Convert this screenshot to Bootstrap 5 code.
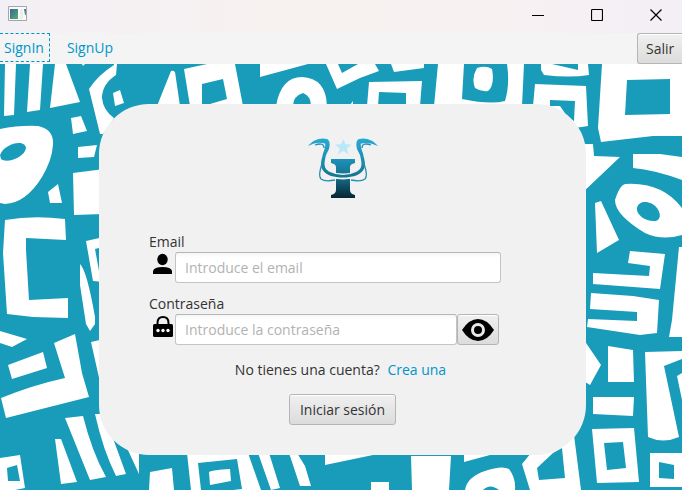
<!DOCTYPE html>
<html lang="es">
<head>
<meta charset="utf-8">
<meta name="viewport" content="width=device-width, initial-scale=1">
<title>Iniciar sesión</title>
<link href="https://cdn.jsdelivr.net/npm/bootstrap@5.3.0/dist/css/bootstrap.min.css" rel="stylesheet">
<style>
  body { font-family: "Open Sans", "Noto Sans", sans-serif; font-size: 14px; line-height: 20px; color: #333; background: #189cb9; }
  a { color: #0096c9; text-decoration: none; }
  .title-bar { height: 33px; background: linear-gradient(90deg, #f3f0f5, #f7f1f0 40%, #f7f1f1 70%, #f4eff6); }
  .win-btn { width: 59px; height: 27px; padding: 0 0 0 6px; border: 0; background: none; color: #000; }
  .menu-row { height: 31px; background: #f4f4f4; }
  .menu-link { height: 29px; line-height: 27px; padding: 0 5px 0 4px; border: 1px solid transparent; }
  .menu-link.focused { border: 1px dashed #0096c9; border-left: 0; }
  .fx-btn { height: 31px; padding: 0 10px; border: 1px solid #b5b5b5; border-radius: 3px; background: linear-gradient(#f0f0f0, #dcdcdc); box-shadow: inset 0 1px #fff; color: #333; font-size: 14px; line-height: 20px; }
  .exit-btn { width: 45px; padding: 0 8px; border-right: 0; border-radius: 3px 0 0 3px; }
  .pattern { z-index: 0; }
  .login-card { z-index: 1; max-width: 487px; margin: 40px 0 35px 3px; padding: 34px 85px 30px 50px; border-radius: 50px; background: #f1f1f1; }
  .brand-logo, .form-foot { margin-right: -35px; }
  .login-form { margin-top: 32px; }
  .field-gap { margin-top: 11px; }
  .field-icon { width: 26px; flex: none; }
  .fx-input { height: 31px; min-width: 0; padding: 0 9px; border: 1px solid #c4c4c4; border-top-color: #b5b5b5; border-radius: 3px; font-size: 14px; background: linear-gradient(#f6f6f6, #fff 5px); }
  .fx-input::placeholder { color: #b2b2b2; opacity: 1; }
  .password-row { margin-right: 2px; }
  .eye-btn { width: 42px; flex: none; padding: 0; }
  .signup-hint { margin: 15px 0 14px; }
</style>
<script src="https://cdn.jsdelivr.net/npm/bootstrap@5.3.0/dist/js/bootstrap.bundle.min.js"></script>
</head>
<body class="min-vh-100 d-flex flex-column overflow-hidden">

<header>
  <div class="title-bar d-flex justify-content-between align-items-start">
    <svg class="ms-2 mt-1" width="20" height="18" viewBox="0 0 20 18" aria-hidden="true">
      <defs><linearGradient id="app" x1="0" y1="0" x2="1" y2="1"><stop stop-color="#36679c"/><stop offset="1" stop-color="#56b068"/></linearGradient></defs>
      <path d="M.5 2.5h18v14H.5z" fill="#fafafa" stroke="#a3a6ad"/>
      <path d="M2 5h8v10H2z" fill="url(#app)"/><path d="M12 5h3v10h-3z" fill="#eceeee"/>
      <path d="M16 5h2v6h-1z" fill="url(#app)"/>
    </svg>
    <div class="d-flex">
      <button class="win-btn" type="button" aria-label="Minimizar"><svg width="12" height="12"><path d="M0 6.500h12" stroke="#000"/></svg></button>
      <button class="win-btn" type="button" aria-label="Maximizar"><svg width="12" height="12"><rect x=".5" y=".5" width="11" height="11" rx="1" fill="none" stroke="#000" stroke-width="1.200"/></svg></button>
      <button class="win-btn" type="button" aria-label="Cerrar"><svg width="12" height="12"><path d="M.5.5l11 11M11.500.5l-11 11" stroke="#000" stroke-width="1.200"/></svg></button>
    </div>
  </div>
  <nav class="menu-row d-flex align-items-start" aria-label="Principal">
    <a class="menu-link focused" href="#signin">SignIn</a>
    <a class="menu-link ms-2 ps-2" href="#signup">SignUp</a>
    <button class="fx-btn exit-btn ms-auto" type="button">Salir</button>
  </nav>
</header>

<main class="flex-grow-1 d-flex justify-content-center align-items-start position-relative">
  <svg class="pattern position-absolute top-0 start-0 w-100 h-100" viewBox="0 64 682 426" preserveAspectRatio="xMidYMid slice" aria-hidden="true">
    <path fill="#189cb9" d="M0 64h682v426H0z"/>
    <path fill="#fff" fill-rule="evenodd" d="
      M5 64H16L14 115 4 116Z M30 64H43L40 110 27 112Z M55 64H66L80 102 50 108Z M82 64H85L83 66Z
      M114 64H117L116 75Q102 84 102 98 103 110 114 118L103 134H100L89 89Q98 75 114 65Z
      M113 93L120 90 124 103 115 106Z M71 118L81 116 87 131 73 134Z M78 147L97 145 94 157 78 158Z
      M171 71Q173 70 175 72L180 106H157Z
      M184 69L207 64H235L243 106H190Z M202 84L223 79 227 99 210 104 202 106Z
      M0 129Q20 125 38 126 54 129 53 145 52 160 42 177 26 203 5 204L0 203Z
      M0 155C5 143 25 139 26 148 25 157 7 164 1 159Z
      M48 192L58 184 62 203H50Z M73 173L104 169V214L74 215Z
      M5 220Q33 215 65 219L66 240 26 238V250L29 300 68 298V318L33 317 7 314 3 253Z
      M86 241L104 237V282L93 281Z M95 249L99 248V271Z
      M80 264Q87 271 95 317V324L90 331 86 324 80 285Z
      M0 331L27 339 12 347 0 343Z M8 365L43 352 47 368 12 379Z
      M54 343L75 334 82 373 89 397 6 418 1 398Q33 385 65 378Z M91 342L104 339V400Z
      M65 418L83 416Q92 452 106 477L90 480Z M95 414H104L114 441 126 474 116 476Q103 450 95 414Z
      M55 439H61L77 482 61 484Z M127 448L139 450V474Z
      M0 458L20 455 25 488 15 490H0Z M7 468L17 465 20 481 8 481Z
      M150 472L172 468 174 490H149Z
      M187 453H248L261 490H191Z M198 463L237 459 242 489 233 490H201Z M209 472Q212 470 230 469L231 481 210 485Z
      M258 453H269L280 488 271 490Z M289 453H297L305 466 311 486H300Z M325 453H380L373 455 325 465Z
      M371 482H389V490H371Z M411 456H451L449 490H412Z M464 453H495L490 455 464 462Z
      M465 490Q467 477 485 471 502 465 509 469 516 478 515 490Z M483 490Q490 483 499 490Z
      M531 453L522 464 530 490H581L574 435Z M537 468L553 453 562 448 565 478 539 480Z
      M260 64H308L260 77Z M276 106Q281 77 302 77 326 78 327 106Z M293 106Q293 96 303 93 311 96 311 106Z
      M326 64H338L342 73 358 64H375L379 71 360 78 337 89Z M391 64H424V68L394 72Z
      M350 105L353 101V105Z
      M369 82L422 81 420 106H367Z M379 92L406 93V106H378Z
      M438 64H464L462 99Q490 105 505 101 510 85 507 64H524L522 106H434Z
      M477 68Q486 65 492 69 495 85 488 91 481 92 475 88 471 78 477 68Z
      M541 64H588L589 75Q570 78 544 75L541 70Z M552 64H578V70Z
      M535 84L586 86 588 126 575 128 560 106H533Z M550 100L575 101 574 121 550 110Z
      M602 64H682V136H653L601 142 598 128Z M627 80L670 79V114L625 115Z
      M580 144H593L594 156 620 157 580 195Z M633 154H660L682 157V180Q655 170 633 168Z
      M615 200Q620 184 626 184 662 182 682 208V235Q662 241 645 233 615 215 615 200Z
      M637 208C639 199 652 201 657 208 662 215 660 221 654 221 644 221 636 214 637 208Z
      M595 203L601 201 619 240 597 253Z
      M630 251L665 254 660 289 593 284V273L649 276 650 266 628 263Z
      M591 293L633 296 659 300 657 333 640 335 587 327 588 319 637 321V312L590 309Z
      M679 247H682V337H669L672 320Z
      M582 337L601 365 590 385 582 380Z M608 346L633 350 634 382H608Z M593 397H634L633 416 593 414Z
      M592 429L634 428 639 482 597 483Z M604 443L623 442 626 468 607 470Z
      M645 352L682 351V359L664 366 679 437Q663 444 648 437Z M677 376L682 373V400Z
      M650 453H682V487H650Z M659 462L674 465V479L659 478Z"/>
  </svg>

  <section class="login-card w-100 position-relative">
    <div class="brand-logo text-center">
      <svg width="72" height="62" viewBox="0 0 72 62" role="img" aria-label="Logo">
        <defs>
          <linearGradient id="col" x1="0" y1="0" x2="0" y2="1"><stop stop-color="#1d92b8"/><stop offset=".45" stop-color="#176f8d"/><stop offset="1" stop-color="#052733"/></linearGradient>
          <linearGradient id="horn" x1="0" y1="0" x2="0" y2="1"><stop stop-color="#27aad4"/><stop offset="1" stop-color="#15748f"/></linearGradient>
        </defs>
        <path fill="#b9e9f8" d="M36.300 1l2.200 5.300 6 .3-4.600 3.800 1.600 5.900-5.200-3.400-5.200 3.400 1.600-5.900L28 6.600l6-.3z"/>
        <path fill="url(#col)" d="M24 21h24v4q-5 1-5 4v23q0 4 5 5v3H24v-3q5-1 5-5V29q0-3-5-4z"/>
        <path fill="none" stroke="#f1f1f1" stroke-width="6" d="M22 36q14 5 29 0"/>
        <g fill="url(#horn)">
          <path d="M1 8C6 2 13-1 20 1q4 2 2 10l-3 6c-2 9-3 13 4 17q6 3 13 3v2.500c-9 0-16-2-20-7-4-6-1-11 0-17q3-8 2-10Q10 3 1 8z"/>
          <path d="M71 8C66 2 59-1 52 1q-4 2-2 10l3 6c2 9 3 13-4 17q-6 3-13 3v2.500c9 0 16-2 20-7 4-6 1-11 0-17q-3-8-2-10 8-2 17 2.500z"/>
        </g>
        <path fill="none" stroke="#2190af" stroke-width="1.300" d="M8 7q9-3 9 3M64 7q-9-3-9 3M16 23c-3 8-5 15-2 18q4 3 14 1M56 23c3 8 5 15 2 18q-4 3-14 1"/>
      </svg>
    </div>

    <form class="login-form" onsubmit="return false">
      <label for="email" class="d-block">Email</label>
      <div class="d-flex">
        <span class="field-icon"><svg class="ms-1" width="19" height="22" viewBox="0 0 19 22" aria-hidden="true"><ellipse cx="9.500" cy="7.500" rx="5.200" ry="5.700"/><path d="M0 22v-3q1-4 9.500-4t9.500 4v3z"/></svg></span>
        <input id="email" class="fx-input flex-grow-1" type="email" placeholder="Introduce el email">
      </div>
      <label for="password" class="field-gap d-block">Contraseña</label>
      <div class="password-row d-flex">
        <span class="field-icon"><svg class="ms-1" width="20" height="24" viewBox="0 0 20 24" aria-hidden="true"><path d="M4.500 12V9q0-6 5.500-6t5.500 6v3" fill="none" stroke="#000" stroke-width="2"/><rect y="10" width="20" height="13" rx="1.500"/><g fill="#fff"><circle cx="5" cy="16.500" r="1.700"/><circle cx="10" cy="16.500" r="1.700"/><circle cx="15" cy="16.500" r="1.700"/></g></svg></span>
        <input id="password" class="fx-input flex-grow-1" type="password" placeholder="Introduce la contraseña">
        <button class="fx-btn eye-btn" type="button" aria-label="Mostrar contraseña"><svg width="32" height="22" viewBox="0 0 32 22" aria-hidden="true"><path d="M0 11Q7 0 16 0t16 11Q25 22 16 22T0 11z"/><circle cx="16" cy="11" r="5.500" fill="none" stroke="#e9e9e9" stroke-width="3"/></svg></button>
      </div>
      <div class="form-foot text-center">
        <p class="signup-hint pe-1">No tienes una cuenta? <a class="ms-1" href="#signup">Crea una</a></p>
        <button class="fx-btn" type="submit">Iniciar sesión</button>
      </div>
    </form>
  </section>
</main>
</body>
</html>
